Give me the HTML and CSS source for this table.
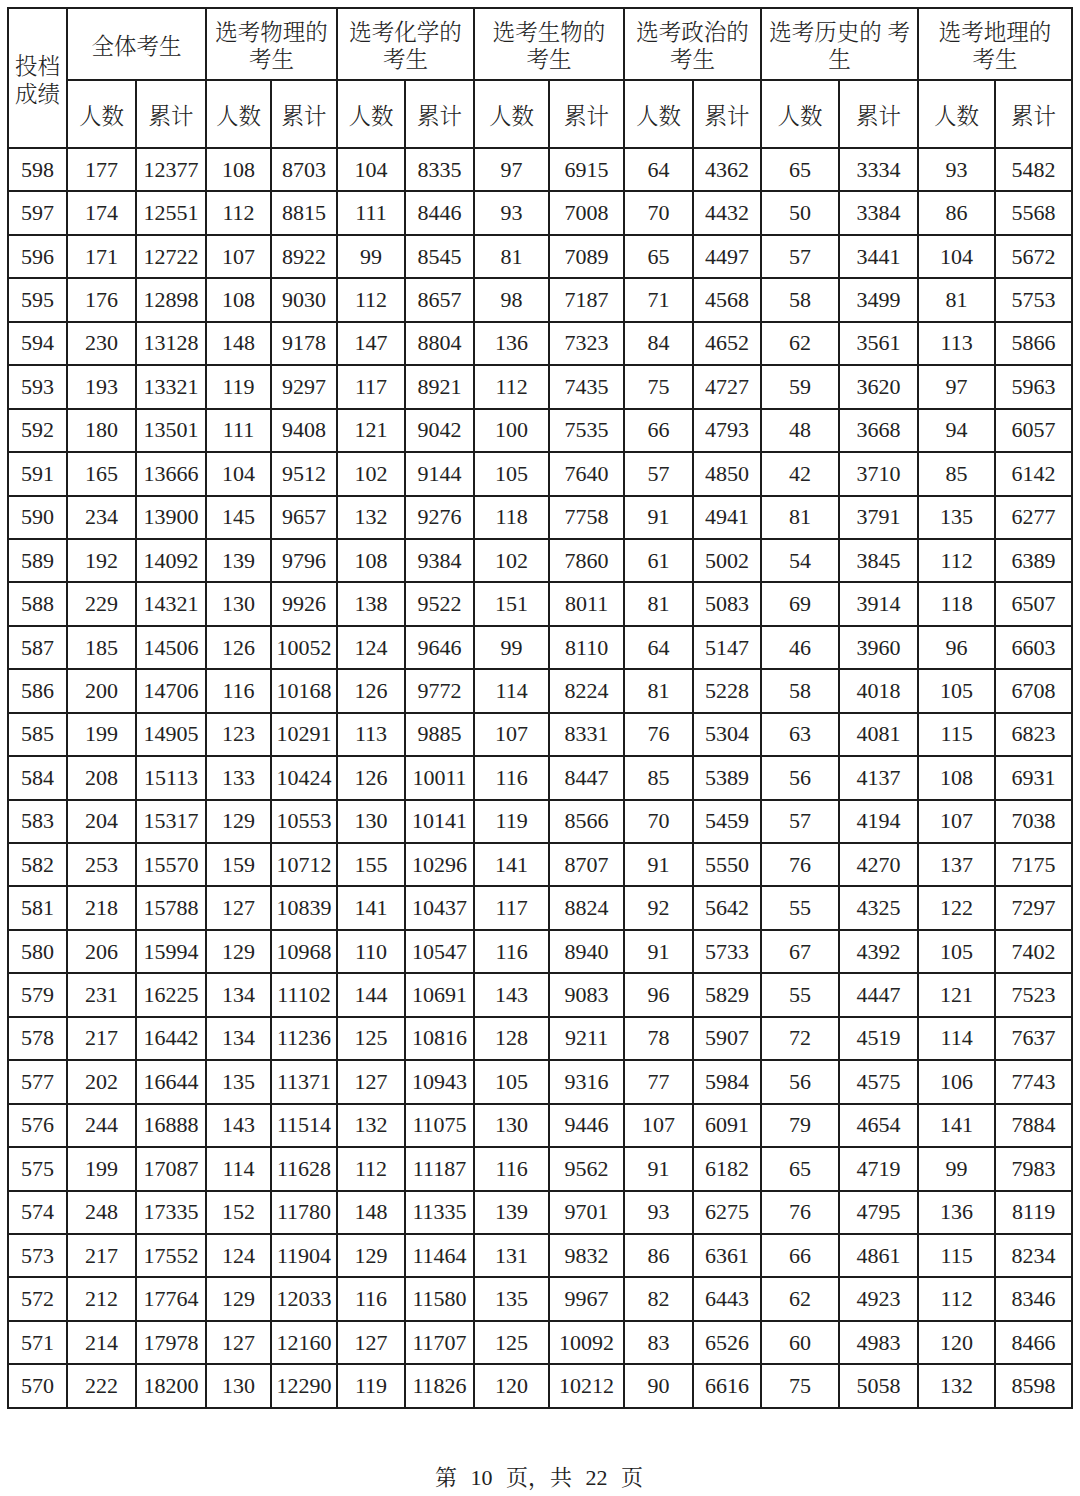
FILE: index.html
```html
<!DOCTYPE html>
<html lang="zh-CN">
<head>
<meta charset="utf-8">
<title>投档成绩分段统计</title>
<link rel="stylesheet" href="styles.css">
</head>
<body>
<div class="page">
<table class="score">
<colgroup>
<col class="c59"><col class="c69"><col class="c70"><col class="c65"><col class="c66"><col class="c68"><col class="c69"><col class="c75"><col class="c75"><col class="c69"><col class="c68"><col class="c78"><col class="c79"><col class="c77"><col class="c77">
</colgroup>
<thead>
<tr class="h1">
<th rowspan="2" class="first">投档<br>成绩</th>
<th colspan="2">全体考生</th>
<th colspan="2">选考物理的<br>考生</th>
<th colspan="2">选考化学的<br>考生</th>
<th colspan="2">选考生物的<br>考生</th>
<th colspan="2">选考政治的<br>考生</th>
<th colspan="2">选考历史的 考<br>生</th>
<th colspan="2">选考地理的<br>考生</th>
</tr>
<tr class="h2">
<th>人数</th><th>累计</th><th>人数</th><th>累计</th><th>人数</th><th>累计</th><th>人数</th><th>累计</th><th>人数</th><th>累计</th><th>人数</th><th>累计</th><th>人数</th><th>累计</th>
</tr>
</thead>
<tbody>
<tr><td>598</td><td>177</td><td>12377</td><td>108</td><td>8703</td><td>104</td><td>8335</td><td>97</td><td>6915</td><td>64</td><td>4362</td><td>65</td><td>3334</td><td>93</td><td>5482</td></tr>
<tr><td>597</td><td>174</td><td>12551</td><td>112</td><td>8815</td><td>111</td><td>8446</td><td>93</td><td>7008</td><td>70</td><td>4432</td><td>50</td><td>3384</td><td>86</td><td>5568</td></tr>
<tr><td>596</td><td>171</td><td>12722</td><td>107</td><td>8922</td><td>99</td><td>8545</td><td>81</td><td>7089</td><td>65</td><td>4497</td><td>57</td><td>3441</td><td>104</td><td>5672</td></tr>
<tr><td>595</td><td>176</td><td>12898</td><td>108</td><td>9030</td><td>112</td><td>8657</td><td>98</td><td>7187</td><td>71</td><td>4568</td><td>58</td><td>3499</td><td>81</td><td>5753</td></tr>
<tr><td>594</td><td>230</td><td>13128</td><td>148</td><td>9178</td><td>147</td><td>8804</td><td>136</td><td>7323</td><td>84</td><td>4652</td><td>62</td><td>3561</td><td>113</td><td>5866</td></tr>
<tr><td>593</td><td>193</td><td>13321</td><td>119</td><td>9297</td><td>117</td><td>8921</td><td>112</td><td>7435</td><td>75</td><td>4727</td><td>59</td><td>3620</td><td>97</td><td>5963</td></tr>
<tr><td>592</td><td>180</td><td>13501</td><td>111</td><td>9408</td><td>121</td><td>9042</td><td>100</td><td>7535</td><td>66</td><td>4793</td><td>48</td><td>3668</td><td>94</td><td>6057</td></tr>
<tr><td>591</td><td>165</td><td>13666</td><td>104</td><td>9512</td><td>102</td><td>9144</td><td>105</td><td>7640</td><td>57</td><td>4850</td><td>42</td><td>3710</td><td>85</td><td>6142</td></tr>
<tr><td>590</td><td>234</td><td>13900</td><td>145</td><td>9657</td><td>132</td><td>9276</td><td>118</td><td>7758</td><td>91</td><td>4941</td><td>81</td><td>3791</td><td>135</td><td>6277</td></tr>
<tr><td>589</td><td>192</td><td>14092</td><td>139</td><td>9796</td><td>108</td><td>9384</td><td>102</td><td>7860</td><td>61</td><td>5002</td><td>54</td><td>3845</td><td>112</td><td>6389</td></tr>
<tr><td>588</td><td>229</td><td>14321</td><td>130</td><td>9926</td><td>138</td><td>9522</td><td>151</td><td>8011</td><td>81</td><td>5083</td><td>69</td><td>3914</td><td>118</td><td>6507</td></tr>
<tr><td>587</td><td>185</td><td>14506</td><td>126</td><td>10052</td><td>124</td><td>9646</td><td>99</td><td>8110</td><td>64</td><td>5147</td><td>46</td><td>3960</td><td>96</td><td>6603</td></tr>
<tr><td>586</td><td>200</td><td>14706</td><td>116</td><td>10168</td><td>126</td><td>9772</td><td>114</td><td>8224</td><td>81</td><td>5228</td><td>58</td><td>4018</td><td>105</td><td>6708</td></tr>
<tr><td>585</td><td>199</td><td>14905</td><td>123</td><td>10291</td><td>113</td><td>9885</td><td>107</td><td>8331</td><td>76</td><td>5304</td><td>63</td><td>4081</td><td>115</td><td>6823</td></tr>
<tr><td>584</td><td>208</td><td>15113</td><td>133</td><td>10424</td><td>126</td><td>10011</td><td>116</td><td>8447</td><td>85</td><td>5389</td><td>56</td><td>4137</td><td>108</td><td>6931</td></tr>
<tr><td>583</td><td>204</td><td>15317</td><td>129</td><td>10553</td><td>130</td><td>10141</td><td>119</td><td>8566</td><td>70</td><td>5459</td><td>57</td><td>4194</td><td>107</td><td>7038</td></tr>
<tr><td>582</td><td>253</td><td>15570</td><td>159</td><td>10712</td><td>155</td><td>10296</td><td>141</td><td>8707</td><td>91</td><td>5550</td><td>76</td><td>4270</td><td>137</td><td>7175</td></tr>
<tr><td>581</td><td>218</td><td>15788</td><td>127</td><td>10839</td><td>141</td><td>10437</td><td>117</td><td>8824</td><td>92</td><td>5642</td><td>55</td><td>4325</td><td>122</td><td>7297</td></tr>
<tr><td>580</td><td>206</td><td>15994</td><td>129</td><td>10968</td><td>110</td><td>10547</td><td>116</td><td>8940</td><td>91</td><td>5733</td><td>67</td><td>4392</td><td>105</td><td>7402</td></tr>
<tr><td>579</td><td>231</td><td>16225</td><td>134</td><td>11102</td><td>144</td><td>10691</td><td>143</td><td>9083</td><td>96</td><td>5829</td><td>55</td><td>4447</td><td>121</td><td>7523</td></tr>
<tr><td>578</td><td>217</td><td>16442</td><td>134</td><td>11236</td><td>125</td><td>10816</td><td>128</td><td>9211</td><td>78</td><td>5907</td><td>72</td><td>4519</td><td>114</td><td>7637</td></tr>
<tr><td>577</td><td>202</td><td>16644</td><td>135</td><td>11371</td><td>127</td><td>10943</td><td>105</td><td>9316</td><td>77</td><td>5984</td><td>56</td><td>4575</td><td>106</td><td>7743</td></tr>
<tr><td>576</td><td>244</td><td>16888</td><td>143</td><td>11514</td><td>132</td><td>11075</td><td>130</td><td>9446</td><td>107</td><td>6091</td><td>79</td><td>4654</td><td>141</td><td>7884</td></tr>
<tr><td>575</td><td>199</td><td>17087</td><td>114</td><td>11628</td><td>112</td><td>11187</td><td>116</td><td>9562</td><td>91</td><td>6182</td><td>65</td><td>4719</td><td>99</td><td>7983</td></tr>
<tr><td>574</td><td>248</td><td>17335</td><td>152</td><td>11780</td><td>148</td><td>11335</td><td>139</td><td>9701</td><td>93</td><td>6275</td><td>76</td><td>4795</td><td>136</td><td>8119</td></tr>
<tr><td>573</td><td>217</td><td>17552</td><td>124</td><td>11904</td><td>129</td><td>11464</td><td>131</td><td>9832</td><td>86</td><td>6361</td><td>66</td><td>4861</td><td>115</td><td>8234</td></tr>
<tr><td>572</td><td>212</td><td>17764</td><td>129</td><td>12033</td><td>116</td><td>11580</td><td>135</td><td>9967</td><td>82</td><td>6443</td><td>62</td><td>4923</td><td>112</td><td>8346</td></tr>
<tr><td>571</td><td>214</td><td>17978</td><td>127</td><td>12160</td><td>127</td><td>11707</td><td>125</td><td>10092</td><td>83</td><td>6526</td><td>60</td><td>4983</td><td>120</td><td>8466</td></tr>
<tr><td>570</td><td>222</td><td>18200</td><td>130</td><td>12290</td><td>119</td><td>11826</td><td>120</td><td>10212</td><td>90</td><td>6616</td><td>75</td><td>5058</td><td>132</td><td>8598</td></tr>
</tbody>
</table>
<p class="footer">第 10 页，共 22 页</p>
</div>
</body>
</html>
```

FILE: styles.css
```css
html, body {
  margin: 0;
  padding: 0;
  background: #ffffff;
}

.page {
  padding: 7px 0 0 7px;
  width: 1064px;
  font-family: "Liberation Serif", "Noto Serif CJK SC", "Noto Sans CJK SC", serif;
  color: #222222;
}

.score {
  border-collapse: collapse;
  table-layout: fixed;
  width: 1064px;
  font-size: 22px;
}

.c59 { width: 59px; }
.c65 { width: 65px; }
.c66 { width: 66px; }
.c68 { width: 68px; }
.c69 { width: 69px; }
.c70 { width: 70px; }
.c75 { width: 75px; }
.c77 { width: 77px; }
.c78 { width: 78px; }
.c79 { width: 79px; }

.score th,
.score td {
  border: 2px solid #1c1c1c;
  padding: 0;
  text-align: center;
  vertical-align: middle;
  white-space: nowrap;
  overflow: hidden;
}

.score th {
  font-family: "Noto Serif CJK SC", "Noto Sans CJK SC", sans-serif;
  font-weight: 300;
  font-size: 22.5px;
  line-height: 27px;
}

.score .h1 { height: 72px; }
.score .h2 { height: 68px; }

.score .first {
  line-height: 28px;
}

.score tbody tr { height: 43.45px; }

.score td {
  line-height: 24px;
}

.footer {
  margin: 54px 0 0 0;
  text-align: center;
  font-size: 22px;
  line-height: 30px;
  word-spacing: 8px;
  font-family: "Liberation Serif", "Noto Serif CJK SC", "Noto Sans CJK SC", serif;
}
```
